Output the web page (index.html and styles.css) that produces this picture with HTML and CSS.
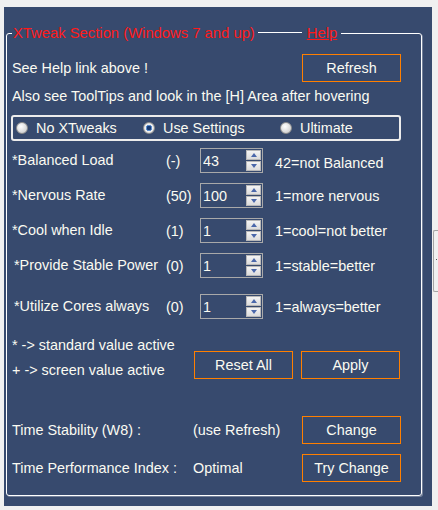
FILE: index.html
```html
<!DOCTYPE html>
<html>
  <head>
    <title>XTweak Section</title>
    <meta name="viewport" content="width=device-width, initial-scale=1">
    <link rel="stylesheet" href="styles.css">
  </head>
  <body>
    <div class="panel">
      <fieldset class="section">
        <legend><span class="title">XTweak Section (Windows 7 and up)</span><span class="rule"></span><a class="help" href="#">Help</a></legend>

        <div class="row top">
          <span>See Help link above !</span>
          <button class="btn">Refresh</button>
        </div>
        <p class="hint">Also see ToolTips and look in the [H] Area after hovering</p>

        <div class="modes">
          <label class="radio"><span class="dot"></span>No XTweaks</label>
          <label class="radio on"><span class="dot"></span>Use Settings</label>
          <label class="radio"><span class="dot"></span>Ultimate</label>
        </div>

        <div class="params">
          <div class="param">
            <span>*Balanced Load</span>
            <span>(-)</span>
            <div class="spin"><input value="43"><div class="arrows"><i class="up"></i><i class="down"></i></div></div>
            <span class="desc low">42=not Balanced</span>
          </div>
          <div class="param">
            <span>*Nervous Rate</span>
            <span>(50)</span>
            <div class="spin"><input value="100"><div class="arrows"><i class="up"></i><i class="down"></i></div></div>
            <span class="desc">1=more nervous</span>
          </div>
          <div class="param">
            <span>*Cool when Idle</span>
            <span>(1)</span>
            <div class="spin"><input value="1"><div class="arrows"><i class="up"></i><i class="down"></i></div></div>
            <span class="desc">1=cool=not better</span>
          </div>
          <div class="param">
            <span class="indent">*Provide Stable Power</span>
            <span>(0)</span>
            <div class="spin"><input value="1"><div class="arrows"><i class="up"></i><i class="down"></i></div></div>
            <span class="desc">1=stable=better</span>
          </div>
          <div class="param far">
            <span class="indent">*Utilize Cores always</span>
            <span>(0)</span>
            <div class="spin"><input value="1"><div class="arrows"><i class="up"></i><i class="down"></i></div></div>
            <span class="desc">1=always=better</span>
          </div>
        </div>

        <div class="notes">
          <div class="keys">
            <div>* -&gt; standard value active</div>
            <div>+ -&gt; screen value active</div>
          </div>
          <button class="btn">Reset All</button>
          <button class="btn">Apply</button>
        </div>

        <div class="row time">
          <span class="name">Time Stability (W8) :</span>
          <span>(use Refresh)</span>
          <button class="btn">Change</button>
        </div>
        <div class="row time next">
          <span class="name">Time Performance Index :</span>
          <span>Optimal</span>
          <button class="btn">Try Change</button>
        </div>
      </fieldset>
    </div>
    <div class="side"><div class="grip"></div></div>
  </body>
</html>
```

FILE: styles.css
```css
html {height:100%;}
body {margin:0; background:#f0f0f0; display:flex; align-items:flex-start; font-family:"Liberation Sans", Arial, sans-serif; font-size:14.4px; color:#fbfbf2;}

.panel {margin:7px 0 0 4px; width:428px; height:499px; box-sizing:border-box; padding-top:17px; background:#374a6e;}
.section {margin:0 0 0 2px; width:416px; box-sizing:border-box; padding:12px 20px 13px 5px; border:1px solid #fff; border-radius:3px; box-shadow:1px 1px 0 rgba(255,255,255,.3);}
.section legend {padding:0 4px 0 1px; line-height:18px; font-size:14.8px; color:#ff1a1a;}
.rule {display:inline-block; vertical-align:top; width:44px; height:1px; margin:8px 5px 0 3px; background:#fff;}
.help {color:#ff1a1a; text-decoration:underline;}

.row {display:flex; align-items:center; height:28px;}
.top {justify-content:space-between;}
.hint {margin:5px 0 0; line-height:18px;}

.btn {width:99px; height:28px; padding:0; background:transparent; border:1px solid #ff7f00; color:#fbfbf2; font:inherit; cursor:pointer;}

.modes {display:grid; grid-template-columns:127px 137px 1fr; align-items:center; height:26px; box-sizing:border-box; margin:10px 0 0 -1px; padding-left:3px; border:2px solid #ececec; border-radius:3px;}
.radio {display:flex; align-items:center; gap:8px;}
.dot {width:12px; height:12px; box-sizing:border-box; border-radius:50%; border:1px solid #8f8f8f; background:radial-gradient(circle at 40% 35%, #fff, #c4c4c4);}
.on .dot {background:radial-gradient(circle, #173a74 0 2px, #5d8fd0 2.5px 3px, #f2f2f2 3.5px, #c4c4c4);}

.params {display:flex; flex-direction:column; gap:10px; margin-top:7px;}
.param {display:grid; grid-template-columns:154px 34px 63px 1fr; align-items:center; height:25px;}
.param.far {margin-top:6px;}
.param > span:first-child {margin-top:-2px;}
.indent {padding-left:2px;}
.desc {padding-left:12px;}
.desc.low {padding-top:4px;}

.spin {display:flex; height:25px; box-sizing:border-box; border:1px solid #a9a9a9;}
.spin input {flex:1; width:0; min-width:0; padding:0 2px; border:none; background:transparent; color:#fbfbf2; font:inherit; outline:none;}
.arrows {display:flex; flex-direction:column; gap:1px; width:16px; padding:1px 1px 1px 0; box-sizing:border-box;}
.arrows i {flex:1; display:flex; align-items:center; justify-content:center; border:1px solid #b8b8b8; background:linear-gradient(#f4f4f4, #dcdcdc);}
.arrows i:after {content:""; border-left:3px solid transparent; border-right:3px solid transparent;}
.up:after {border-bottom:4px solid #4b68aa;}
.down:after {border-top:4px solid #4b68aa;}

.notes {display:flex; align-items:flex-end; margin-top:17px;}
.keys {width:182px; line-height:18px;}
.keys div + div {margin-top:7px;}
.notes .btn + .btn {margin-left:8px;}

.time {margin-top:37px;}
.time.next {margin-top:10px;}
.time .name {width:181px;}
.time .btn {margin-left:auto;}

.side {width:6px; padding-top:230px; display:flex; justify-content:flex-end;}
.grip {width:5px; height:62px; box-sizing:border-box; border:1px solid #a4a4a4; border-right:none; border-radius:2px 0 0 2px; background:radial-gradient(circle, #555 0 0.8px, transparent 1px) 1px 27px / 3px 3px no-repeat, #f0f0f0;}
```
